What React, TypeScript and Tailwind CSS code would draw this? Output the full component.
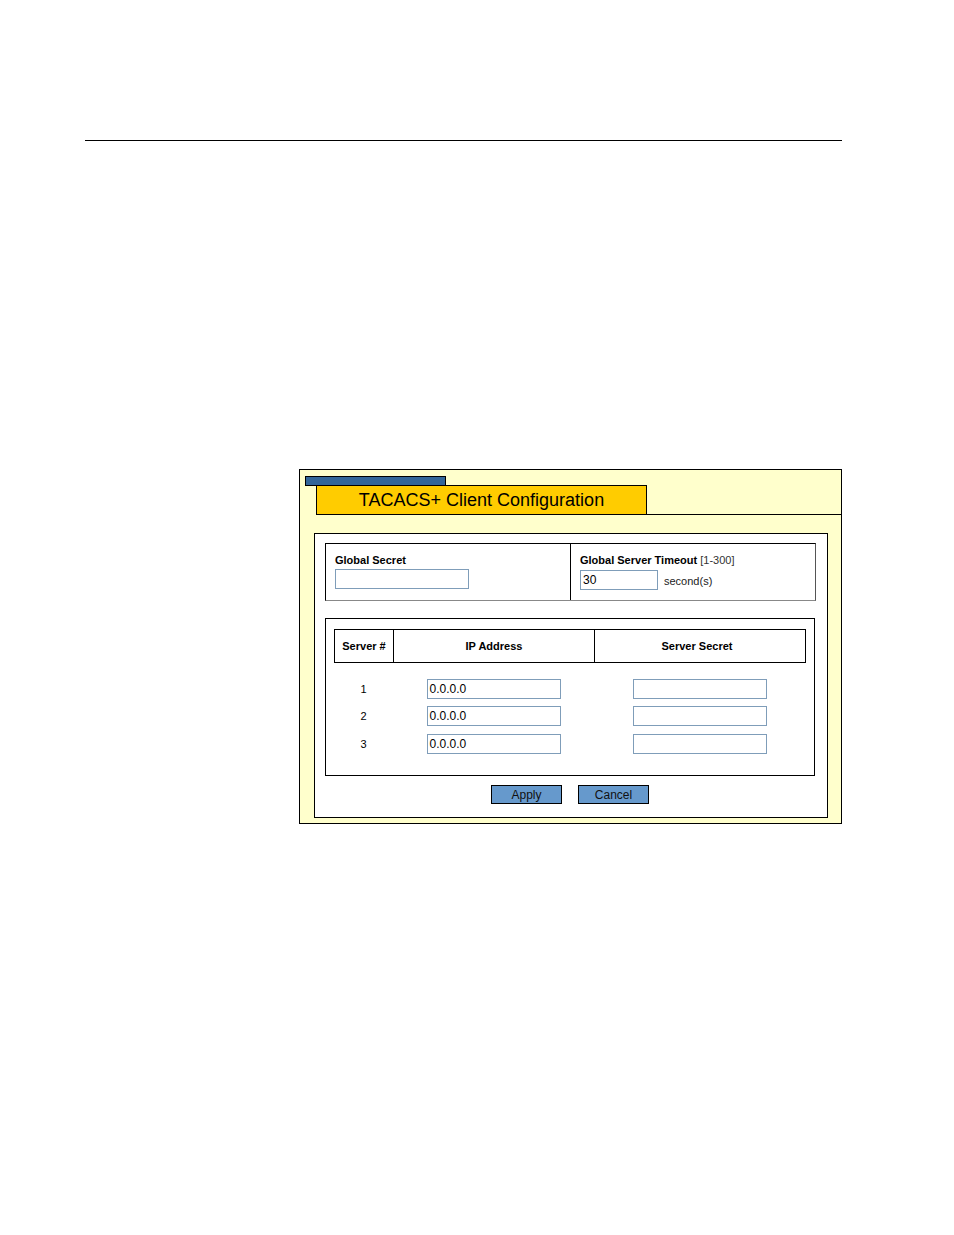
import React from "react";

const inputCls =
  "h-[20px] border border-[#7f9db9] bg-white px-[2px] text-[12px] leading-[18px] text-black";

function Field({ w, value }: { w: string; value?: string }) {
  return <div className={`${inputCls} ${w}`}>{value ?? ""}</div>;
}

export default function App() {
  const rows = ["1", "2", "3"];
  return (
    <div
      className="w-[954px] h-[1235px] bg-white relative"
      style={{ fontFamily: '"Liberation Sans", Arial, sans-serif' }}
    >
      <div className="pt-[140px] pl-[85px]">
        <div className="w-[757px] h-px bg-black" />
      </div>

      <div className="pt-[328px] pl-[299px]">
        <div className="w-[543px] h-[355px] border border-black bg-[#ffffcc] flex flex-col">
          {/* blue tab */}
          <div className="ml-[5px] mt-[6px] w-[141px] h-[10px] bg-[#336699] border border-black" />
          {/* title row */}
          <div className="flex items-end -mt-px">
            <div className="ml-[16px] w-[331px] h-[30px] bg-[#ffcc00] border border-black flex items-center justify-center text-[18px] text-black">
              TACACS+ Client Configuration
            </div>
            <div className="flex-1 border-b border-black" />
          </div>
          {/* white content box */}
          <div className="ml-[14px] mt-[18px] w-[514px] h-[285px] border border-black bg-white flex flex-col">
            {/* global settings */}
            <div className="ml-[10px] mt-[9px] w-[491px] h-[58px] border-t border-l border-black border-r border-r-[#555] border-b border-b-[#888] flex">
              <div className="w-[245px] border-r border-black pl-[9px] pt-[9px]">
                <div className="text-[11px] font-bold leading-[14px] text-black">
                  Global Secret
                </div>
                <div className="mt-[2px]">
                  <Field w="w-[134px]" />
                </div>
              </div>
              <div className="flex-1 pl-[9px] pt-[9px]">
                <div className="text-[11px] leading-[14px] text-black">
                  <span className="font-bold">Global Server Timeout</span>{" "}
                  <span className="text-[#333]">[1-300]</span>
                </div>
                <div className="mt-[3px] flex items-end">
                  <Field w="w-[78px]" value="30" />
                  <span className="ml-[6px] text-[11px] leading-[14px] text-[#222] mb-[2px]">
                    second(s)
                  </span>
                </div>
              </div>
            </div>

            {/* servers */}
            <div className="ml-[10px] mt-[17px] w-[490px] h-[158px] border border-black flex flex-col">
              <div className="ml-[8px] mt-[10px] w-[472px] h-[34px] border border-black flex text-[11px] font-bold text-black">
                <div className="w-[59px] border-r border-black flex items-center justify-center">
                  Server #
                </div>
                <div className="w-[201px] border-r border-black flex items-center justify-center">
                  IP Address
                </div>
                <div className="flex-1 flex items-center justify-center pr-[6px]">
                  Server Secret
                </div>
              </div>
              <div className="ml-[8px] mt-[16px] w-[472px] flex flex-col gap-[7px]">
                {rows.map((r, i) => (
                  <div
                    key={r}
                    className={`flex items-center h-[20px] ${i === 2 ? "mt-px" : ""}`}
                  >
                    <div className="w-[59px] text-center text-[11px] text-black">
                      {r}
                    </div>
                    <div className="w-[201px] flex justify-center">
                      <Field w="w-[134px]" value="0.0.0.0" />
                    </div>
                    <div className="flex-1 flex justify-center">
                      <Field w="w-[134px]" />
                    </div>
                  </div>
                ))}
              </div>
            </div>

            {/* buttons */}
            <div className="mt-[9px] flex justify-center gap-[16px] pr-[2px]">
              <div className="w-[71px] h-[19px] bg-[#6699cc] border border-black flex items-center justify-center text-[12px] text-[#111]">
                Apply
              </div>
              <div className="w-[71px] h-[19px] bg-[#6699cc] border border-black flex items-center justify-center text-[12px] text-[#111]">
                Cancel
              </div>
            </div>
          </div>
        </div>
      </div>
    </div>
  );
}
